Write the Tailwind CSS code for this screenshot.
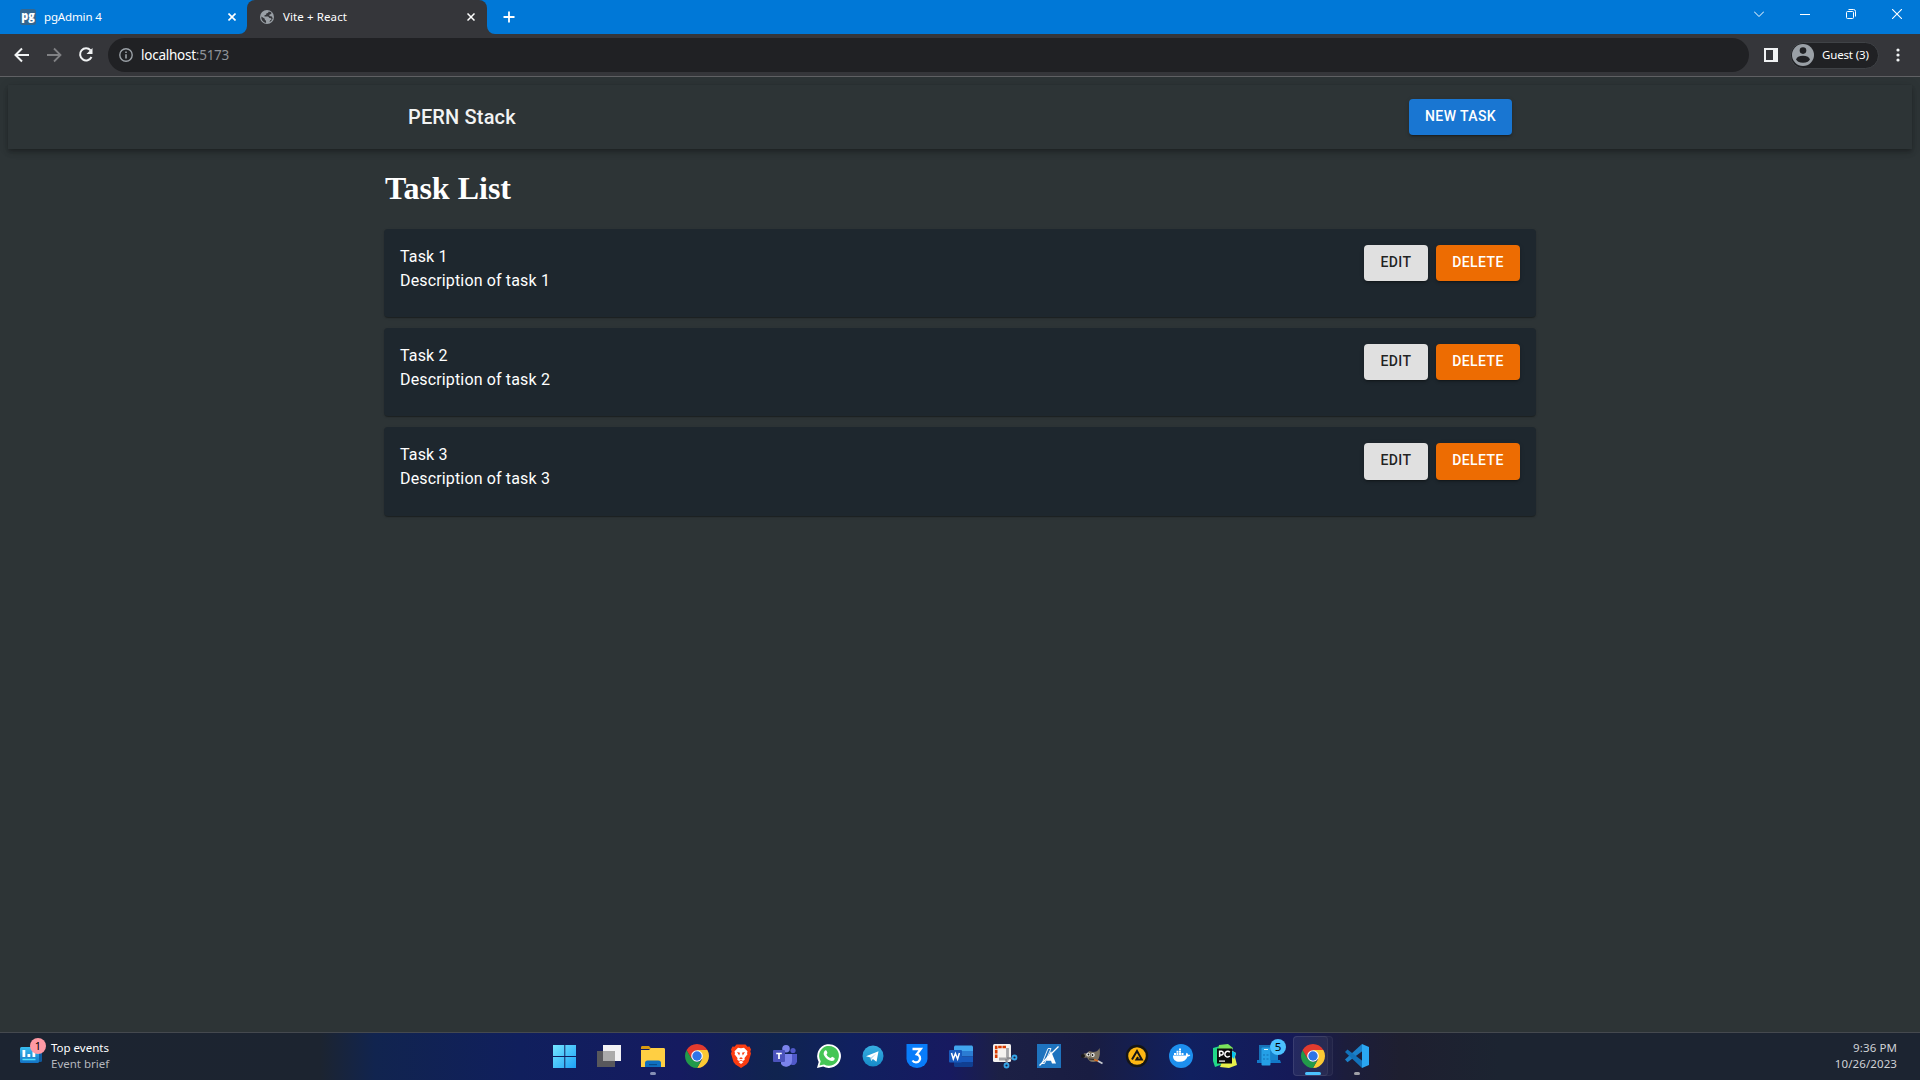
<!DOCTYPE html>
<html lang="en">
<head>
<meta charset="utf-8">
<title>Vite + React</title>
<script src="https://cdn.jsdelivr.net/npm/@tailwindcss/browser@4"></script>
</head>
<body class="h-[1080px] w-[1920px] overflow-hidden bg-[#2d3436] flex flex-col font-['Noto_Sans',sans-serif] text-white">

<!-- Tab strip -->
<div class="h-[34px] shrink-0 bg-[#0078d7] flex items-center">
  <div class="w-[247px] h-full flex items-center pl-5 pr-[11px] relative">
    <svg class="w-4 h-4 shrink-0" viewBox="0 0 16 16"><rect width="16" height="16" rx="2.500" fill="#336791"/><text x="8" y="11" text-anchor="middle" textLength="13.500" lengthAdjust="spacingAndGlyphs" font-family="Open Sans, sans-serif" font-weight="800" font-size="11.500" fill="#fff">pg</text></svg>
    <span class="ml-2 text-[11.5px] tracking-[-0.15px] leading-4 flex-1">pgAdmin 4</span>
    <svg class="w-2 h-2" viewBox="0 0 8 8" stroke="#fff" stroke-width="1.600"><path d="M.5.5l7 7M7.500.5l-7 7"/></svg>
  </div>
  <div class="w-[240px] h-full bg-[#35363a] rounded-t-lg flex items-center pl-3 pr-3 relative">
    <svg class="absolute bottom-0 -left-2 w-2 h-2" viewBox="0 0 8 8"><path d="M8 0v8H0a8 8 0 0 0 8-8z" fill="#35363a"/></svg>
    <svg class="absolute bottom-0 -right-2 w-2 h-2" viewBox="0 0 8 8"><path d="M0 0v8h8a8 8 0 0 1-8-8z" fill="#35363a"/></svg>
    <svg class="w-4 h-4 shrink-0" viewBox="0 0 16 16"><circle cx="8" cy="8" r="7" fill="#9aa0a6"/><path d="M2.300 7.500l3.500 2.200v1.100l1.200 1 .1 2.200A6 6 0 0 1 2.300 7.500zM9.500 2.300l-.3 1.500-1.900.6-.2 1.400-1.600.5v1.200l3.700.1 1.200 1.300 1.700.3.400 1.600-1.400.5-.6 1.700a6 6 0 0 0 3.200-3.500l-.8-2-2.600-.6.300-1.500 1.500-.4.400-1.200a6 6 0 0 0-3-1.500z" fill="#35363a"/></svg>
    <span class="ml-2 text-[11.5px] tracking-[0.1px] leading-4 flex-1">Vite + React</span>
    <svg class="w-2 h-2" viewBox="0 0 8 8" stroke="#fff" stroke-width="1.500"><path d="M.5.5l7 7M7.500.5l-7 7"/></svg>
  </div>
  <svg class="w-3 h-3 ml-4" viewBox="0 0 12 12" stroke="#fff" stroke-width="1.800"><path d="M6 .5v11M.5 6h11"/></svg>
  <div class="ml-auto flex items-center gap-9 pr-[18px] pb-1.5">
    <svg class="w-2.5 h-2.5" viewBox="0 0 10 10" fill="none" stroke="#fff" stroke-width="1"><path d="M0 2.500l5 5 5-5"/></svg>
    <svg class="w-2.5 h-2.5" viewBox="0 0 10 10" stroke="#fff"><path d="M0 5.500h10"/></svg>
    <svg class="w-2.5 h-2.5" viewBox="0 0 10 10" fill="none" stroke="#fff"><rect x=".5" y="2.500" width="7" height="7" rx="1"/><path d="M2.500.5h5a2 2 0 0 1 2 2v5"/></svg>
    <svg class="w-2.5 h-2.5" viewBox="0 0 10 10" stroke="#fff" stroke-width="1.100"><path d="M0 0l10 10M10 0L0 10"/></svg>
  </div>
</div>

<!-- Toolbar -->
<div class="h-[43px] shrink-0 bg-[#35363a] border-b border-[#606164] flex items-center pl-3.5">
  <svg class="w-4 h-4" viewBox="0 0 16 16" fill="none" stroke="#f1f3f4" stroke-width="2"><path d="M15 8H2M8 1.500L1.500 8 8 14.500"/></svg>
  <svg class="w-4 h-4 ml-4" viewBox="0 0 16 16" fill="none" stroke="#808184" stroke-width="1.800"><path d="M1 8H14M8 1.500L14.500 8 8 14.500"/></svg>
  <svg class="w-4 h-4 ml-4" viewBox="0 0 16 16" fill="none" stroke="#f1f3f4" stroke-width="2"><path d="M12.600 3.400A6 6 0 1 0 13.500 10"/><path d="M14.500 1v6h-6z" fill="#f1f3f4" stroke="none"/></svg>
  <div class="ml-3.5 w-[1641px] h-[34px] rounded-full bg-[#202124] flex items-center pl-[11px]">
    <svg class="w-3.5 h-3.5" viewBox="0 0 14 14"><circle cx="7" cy="7" r="6.200" fill="none" stroke="#9aa0a6" stroke-width="1.400"/><path d="M6.200 6.200h1.600v4.300H6.200zM6.200 3.400h1.600v1.600H6.200z" fill="#9aa0a6"/></svg>
    <span class="ml-2 text-[13.5px] tracking-[-0.25px] leading-5">localhost<span class="text-[#8f9398]">:5173</span></span>
  </div>
  <svg class="w-3.5 h-3.5 ml-[15px]" viewBox="0 0 14 14"><path d="M0 0h14v14H0zM2 2v10h7V2z" fill-rule="evenodd" fill="#f1f3f4"/></svg>
  <div class="ml-3 w-[89px] h-[27px] rounded-full bg-[#202124] border border-[#3f4246] flex items-center pl-px">
    <svg class="w-[22px] h-[22px] shrink-0" viewBox="0 0 22 22"><circle cx="11" cy="11" r="11" fill="#9aa0a6"/><circle cx="11" cy="6.600" r="3.300" fill="#202124"/><ellipse cx="11" cy="15.300" rx="6.700" ry="3.500" fill="#202124"/></svg>
    <span class="ml-2 text-[11.5px] tracking-[-0.15px] leading-4 whitespace-nowrap">Guest (3)</span>
  </div>
  <svg class="w-1 h-3.5 ml-[17px]" viewBox="0 0 4 14" fill="#f1f3f4"><circle cx="2" cy="2" r="1.600"/><circle cx="2" cy="7" r="1.600"/><circle cx="2" cy="12" r="1.600"/></svg>
</div>

<!-- Page -->
<main class="flex-1 min-h-0 p-2 font-[Roboto,sans-serif]">
  <header class="h-16 shadow-[0_2px_4px_-1px_rgba(0,0,0,.2),0_4px_5px_0_rgba(0,0,0,.14),0_1px_10px_0_rgba(0,0,0,.12)]">
    <div class="w-[1152px] h-full mx-auto px-6 flex items-center justify-between">
      <span class="text-xl leading-8 font-medium tracking-[0.15px] text-[#f2f3f3]">PERN Stack</span>
      <button class="h-9 w-[103px] pb-0.5 rounded-sm bg-[#1976d2] text-sm font-medium tracking-[0.4px] shadow-[0_3px_1px_-2px_rgba(0,0,0,.2),0_2px_2px_0_rgba(0,0,0,.14),0_1px_5px_0_rgba(0,0,0,.12)]">NEW TASK</button>
    </div>
  </header>
  <section class="w-[1152px] mx-auto flex flex-col">
    <h1 class="mt-[21px] mb-[21.9px] pl-px text-[32px] leading-[37px] font-bold font-['Liberation_Serif',serif]">Task List</h1>
    <div class="flex flex-col gap-[10.6px]">
      <article class="h-[88.5px] rounded-sm bg-[#1e272e] p-4 flex justify-between items-start shadow-[0_2px_1px_-1px_rgba(0,0,0,.2),0_1px_1px_0_rgba(0,0,0,.14),0_1px_3px_0_rgba(0,0,0,.12)]">
        <div class="leading-6 tracking-[0.15px]"><p>Task 1</p><p>Description of task 1</p></div>
        <div class="flex gap-2"><button class="h-[36.5px] pb-0.5 w-16 rounded-sm bg-[#e0e0e0] text-black/87 text-sm font-medium tracking-[0.4px] shadow-[0_3px_1px_-2px_rgba(0,0,0,.2),0_2px_2px_0_rgba(0,0,0,.14),0_1px_5px_0_rgba(0,0,0,.12)]">EDIT</button><button class="h-[36.5px] pb-0.5 w-21 rounded-sm bg-[#ed6c02] text-sm font-medium tracking-[0.4px] shadow-[0_3px_1px_-2px_rgba(0,0,0,.2),0_2px_2px_0_rgba(0,0,0,.14),0_1px_5px_0_rgba(0,0,0,.12)]">DELETE</button></div>
      </article>
      <article class="h-[88.5px] rounded-sm bg-[#1e272e] p-4 flex justify-between items-start shadow-[0_2px_1px_-1px_rgba(0,0,0,.2),0_1px_1px_0_rgba(0,0,0,.14),0_1px_3px_0_rgba(0,0,0,.12)]">
        <div class="leading-6 tracking-[0.15px]"><p>Task 2</p><p>Description of task 2</p></div>
        <div class="flex gap-2"><button class="h-[36.5px] pb-0.5 w-16 rounded-sm bg-[#e0e0e0] text-black/87 text-sm font-medium tracking-[0.4px] shadow-[0_3px_1px_-2px_rgba(0,0,0,.2),0_2px_2px_0_rgba(0,0,0,.14),0_1px_5px_0_rgba(0,0,0,.12)]">EDIT</button><button class="h-[36.5px] pb-0.5 w-21 rounded-sm bg-[#ed6c02] text-sm font-medium tracking-[0.4px] shadow-[0_3px_1px_-2px_rgba(0,0,0,.2),0_2px_2px_0_rgba(0,0,0,.14),0_1px_5px_0_rgba(0,0,0,.12)]">DELETE</button></div>
      </article>
      <article class="h-[88.5px] rounded-sm bg-[#1e272e] p-4 flex justify-between items-start shadow-[0_2px_1px_-1px_rgba(0,0,0,.2),0_1px_1px_0_rgba(0,0,0,.14),0_1px_3px_0_rgba(0,0,0,.12)]">
        <div class="leading-6 tracking-[0.15px]"><p>Task 3</p><p>Description of task 3</p></div>
        <div class="flex gap-2"><button class="h-[36.5px] pb-0.5 w-16 rounded-sm bg-[#e0e0e0] text-black/87 text-sm font-medium tracking-[0.4px] shadow-[0_3px_1px_-2px_rgba(0,0,0,.2),0_2px_2px_0_rgba(0,0,0,.14),0_1px_5px_0_rgba(0,0,0,.12)]">EDIT</button><button class="h-[36.5px] pb-0.5 w-21 rounded-sm bg-[#ed6c02] text-sm font-medium tracking-[0.4px] shadow-[0_3px_1px_-2px_rgba(0,0,0,.2),0_2px_2px_0_rgba(0,0,0,.14),0_1px_5px_0_rgba(0,0,0,.12)]">DELETE</button></div>
      </article>
    </div>
  </section>
</main>

<!-- Taskbar -->
<footer class="h-12 shrink-0 pb-[1px] border-t border-[#45494f] bg-[linear-gradient(90deg,#1c2431_0px,#1c2430_320px,#11244f_375px,#101f5d_520px,#151b60_680px,#10244f_775px,#10205f_850px,#171a60_950px,#1c2045_1000px,#191d42_1090px,#102060_1190px,#151a58_1290px,#1c1d3c_1345px,#1e1f30_1400px,#1c2431_1500px,#1c2431_1920px)] flex items-center text-[11.5px] leading-4">
  <div class="w-[553px] flex items-center pl-5 pb-px">
    <div class="relative w-6 h-6">
      <svg class="w-[22px] h-[22px]" viewBox="0 0 22 22"><defs><linearGradient id="wd" x2="0" y2="1"><stop stop-color="#38bdf0"/><stop offset="1" stop-color="#1473c4"/></linearGradient></defs><rect x="3" y="3" width="19" height="15" rx="1.500" fill="#0f5a9e"/><rect y="3" width="19" height="16" rx="1.500" fill="url(#wd)"/><path d="M2.500 6h2.800v7H2.500zM7.500 10h2.800v3H7.500zM12.500 8h2.800v5h-2.800z" fill="#fff"/><path d="M2.500 15.500h13" stroke="#4fe0ff" stroke-width="1.500"/></svg>
      <span class="absolute -top-[6px] left-[10px] w-4 h-4 rounded-full bg-[#ff99a4] text-black text-[11px] text-center leading-4">1</span>
    </div>
    <div class="ml-[7px]"><p>Top events</p><p class="text-[#b4b7bd]">Event brief</p></div>
  </div>
  <div class="flex gap-5 items-center h-full">
    <svg class="w-6 h-6 overflow-visible" viewBox="0 0 24 24"><defs><linearGradient id="win" x2="1" y2="1"><stop stop-color="#74e5ff"/><stop offset="1" stop-color="#1da2f5"/></linearGradient></defs><path d="M0 1h11.300v11H0zM12.300 1H23v11H12.300zM0 13h11.300v11H0zM12.300 13H23v11H12.300z" fill="url(#win)"/></svg>
    <svg class="w-6 h-6" viewBox="0 0 24 24"><path d="M0 7h18v16H0z" fill="#58585c"/><path d="M6 1h18v16H6z" fill="#f2f2f4"/><path d="M6 7h12v10H6z" fill="#aaa"/></svg>
    <svg class="w-6 h-6 overflow-visible" viewBox="0 0 24 24"><path d="M0 3.500C0 2.500.5 2 1.500 2H8l2.500 3H0z" fill="#d89a10"/><path d="M0 6h8l2-2h12.500c1 0 1.500.5 1.500 1.500V23H0z" fill="#ffcf43"/><path d="M4 23v-4a2.500 2.500 0 0 1 2.500-2.500h11A2.500 2.500 0 0 1 20 19v4z" fill="#0f6fc0"/><path d="M8 20h8v1.200H8z" fill="#094d8a"/><rect x="9" y="28" width="6" height="3" rx="1.500" fill="#8790b5"/></svg>
    <svg class="w-6 h-6" viewBox="0 0 24 24"><path d="M12 6h10.390A12 12 0 0 1 12 24l5.200-9z" fill="#fcc934"/><path d="M1.610 6L6.800 15l5.200 3 4-1L12 24A12 12 0 0 1 1.610 6z" fill="#229a4a"/><path d="M1.610 6A12 12 0 0 1 22.390 6H12l-5 4-.2 5z" fill="#e33b2e"/><circle cx="12" cy="12" r="5.800" fill="#fff"/><circle cx="12" cy="12" r="4.700" fill="#2d74e8"/></svg>
    <svg class="w-6 h-6" viewBox="0 0 24 24"><path d="M7.500.5h9l2 2.200 2-.3 1.500 3-.7 2 .7 2.100-2.500 8.500-2 2.500L12 24l-5.500-3.500-2-2.500L2 9.500l.7-2.100-.7-2 1.500-3 2 .3z" fill="#fb3c10"/><path d="M12 4.200l3-.5 3.500 3.500-.5 2 .5 1-3 3.800.2 1.800-1.700 1.200L12 16l-2 1-1.700-1.200.2-1.800-3-3.800.5-1-.5-2L9 3.700z" fill="#fff"/><path d="M8 8l3 .8-.8 2.700zM16 8l-3 .8.8 2.700zM10 14.200l2-.9 2 .9-2 1z" fill="#fb3c10"/><path d="M9.500 18l2.500-1.200 2.500 1.200L12 20z" fill="#fff"/></svg>
    <svg class="w-6 h-6" viewBox="0 0 24 24"><circle cx="20" cy="6.500" r="2.600" fill="#5059c9"/><path d="M17 10h7v7.500a4 4 0 0 1-6 3z" fill="#5059c9"/><circle cx="13" cy="4.800" r="3.800" fill="#7b83eb"/><path d="M8 10h11v7a6 6 0 0 1-11 3z" fill="#7b83eb"/><rect y="6" width="12" height="12" rx="1" fill="#4b53bc"/><path d="M3.200 9.500h5.600M6 9.500V15" stroke="#fff" stroke-width="1.700"/></svg>
    <svg class="w-6 h-6" viewBox="0 0 24 24"><path d="M0 24l1.700-6.100A11.900 11.900 0 1 1 6.200 22.400z" fill="#fff"/><path d="M2.500 21.500l1.200-4.300a9.900 9.900 0 1 1 3.400 3.200z" fill="#45c655"/><path d="M8.400 6.300c.4-.3 1 .1 1.200.5l.8 2c.1.500-.8 1.300-.9 1.600.7 1.600 2.300 3 4.100 3.700.4 0 1.200-1.400 1.600-1.300l2.300 1.200c.4.300 0 1.700-.4 2.200-1 1-2.800 1-4.300.4-3-1.200-5.200-3.700-6-5.800-.5-1.600.3-3.700 1.600-4.500z" fill="#fff"/></svg>
    <svg class="w-6 h-6" viewBox="0 0 24 24"><defs><linearGradient id="tg" x2="0" y2="1"><stop stop-color="#37aee2"/><stop offset="1" stop-color="#168bc8"/></linearGradient></defs><circle cx="12" cy="12" r="10.500" fill="url(#tg)"/><path d="M5 12.200L17.500 7.200l-2 10.500-3.600-2.600-1.800 1.800-.5-3.500z" fill="#fff"/><path d="M9.600 13.400l5.700-4-4.300 4.900-.9 2.600z" fill="#b8d9ee"/></svg>
    <svg class="w-6 h-6" viewBox="0 0 24 24"><path d="M1.500 0h21v15a10.500 9 0 0 1-21 0z" fill="#087cfa"/><path d="M7.500 5h8.300l-4 5.300a4.100 4.100 0 1 1-4.300 6.200" fill="none" stroke="#fff" stroke-width="2.300"/></svg>
    <svg class="w-6 h-6" viewBox="0 0 24 24"><path d="M6 1.500h17l1 1V7H5V2.500z" fill="#41a5ee"/><path d="M5 7h19v5.500H5z" fill="#2b7cd3"/><path d="M5 12.500h19V18H5z" fill="#185abd"/><path d="M5 18h19v4l-1 1H6l-1-1z" fill="#103f91"/><rect y="6" width="13" height="12.500" rx="1" fill="#185abd"/><path d="M2.500 9l1.800 6 2.100-5.500L8.600 15l1.800-6" fill="none" stroke="#fff" stroke-width="1.500"/></svg>
    <svg class="w-6 h-6 overflow-visible" viewBox="0 0 24 24"><rect width="18" height="18" rx="1.500" fill="#f4f2f0"/><path d="M13 3H3.200v11" fill="none" stroke="#d83b01" stroke-width="2.600" stroke-dasharray="3.500 .8"/><path d="M14.500 4v11H6" fill="none" stroke="#a5a5a8" stroke-width="2.800"/><path d="M14 14l5 .5M13 15l1 4" stroke="#8c8c90" stroke-width="2.200"/><circle cx="21.500" cy="13.500" r="2" fill="none" stroke="#35a5e8" stroke-width="1.800"/><circle cx="13.500" cy="21.500" r="2" fill="none" stroke="#35a5e8" stroke-width="1.800"/></svg>
    <svg class="w-6 h-6" viewBox="0 0 24 24"><path d="M0 0h24v24H0z" fill="#1e73be"/><path d="M5 19.500L11 4.500h3L7.500 19.500z" fill="none" stroke="#fff" stroke-width=".9"/><path d="M14 7l5 12.500h-4l-1-2.800H9z" fill="#fff"/><path d="M2.500 21.500L21.500 2.500" stroke="#fff" stroke-width="1.300"/></svg>
    <svg class="w-6 h-6" viewBox="0 0 24 24"><path d="M1 11l3-2 2 1 2-3 4 1c3 0 5-1 6.500-4 .8 4 .5 8-1 11-1 2-3 3.200-5.500 3-3 0-4.500-2-6-4.500l-4 .5z" fill="#7b7262"/><circle cx="7.200" cy="10.500" r="2" fill="#eee"/><circle cx="11.800" cy="11" r="1.900" fill="#eee"/><circle cx="7.500" cy="10.500" r=".9" fill="#111"/><circle cx="11.500" cy="11" r=".9" fill="#111"/><circle cx="2" cy="12" r="2" fill="#17171b"/><path d="M8 15l6 .5" stroke="#222" stroke-width="1"/><path d="M13 15.500l4.500 1.800" stroke="#d96d20" stroke-width="1.500"/><path d="M17 17l4.500 2.500" stroke="#c8cbd0" stroke-width="1.800"/></svg>
    <svg class="w-6 h-6" viewBox="0 0 24 24"><circle cx="12" cy="12" r="11.200" fill="#151515"/><circle cx="12" cy="12" r="8.800" fill="#fdb713"/><path d="M7 15.500L12 7l4.800 8.500h-5.300l1.500-2.500" fill="none" stroke="#151515" stroke-width="2"/></svg>
    <svg class="w-6 h-6" viewBox="0 0 24 24"><circle cx="12" cy="12" r="12" fill="#1d8fee"/><path d="M4 11.500h13c-.2-1.300 0-2 .8-2.800.9.600 1.200 1.200 1.300 2 .9-.1 1.600 0 2.200.4-.5 1.200-1.600 1.500-2.700 1.500-1.200 3.600-4 5.200-8 5.200-4.300 0-6.700-2.300-6.600-6.300z" fill="#fff"/><path d="M5 9h2v2H5zM7.500 9h2v2h-2zM10 9h2v2h-2zM12.500 9h2v2h-2zM7.500 6.700h2v2h-2zM10 6.700h2v2h-2zM10 4.600h2v1.700h-2z" fill="#fff"/></svg>
    <svg class="w-6 h-6" viewBox="0 0 24 24"><path d="M0 4l7-2 7 3-4 15-8 3-2-6z" fill="#21d789"/><path d="M6 1l9-1 5 4-3 6-12-2z" fill="#7be35c"/><path d="M18 6l5 3-1 4 2 8-8 3-9-1 2-5z" fill="#e8f04b"/><path d="M19 7l4 2-2 6-3-3z" fill="#07c3f2"/><path d="M4 4.500h15v15H4z" fill="#0b0b0b"/><path d="M6 16.500h6v1.200H6z" fill="#fff"/><path d="M6.600 13V7.200h2.200a1.900 1.900 0 0 1 0 3.700H6.600M16.800 8.300a2.800 2.800 0 1 0 0 3.700" fill="none" stroke="#fff" stroke-width="1.500"/></svg>
    <div class="relative w-6 h-6"><svg class="w-6 h-6" viewBox="0 0 24 24"><path d="M2 1h16v15H2z" fill="#1672b8"/><path d="M0 16h23l1 3H0z" fill="#1278c8"/><rect x="4.500" y="3.500" width="9" height="18" rx="1" fill="#25a0e6"/><path d="M13.500 6H21v10h-7.500z" fill="#1682cc"/><path d="M6 11h2M9.500 11h2M6 15h2M9.500 15h2" stroke="#1270b5" stroke-width="1"/><path d="M7 5.500h4" stroke="#d9f3ff"/></svg><span class="absolute -top-[5px] left-[13px] w-4 h-4 rounded-full bg-[#4cc2ff] text-black text-[11.5px] leading-4 text-center">5</span></div>
    <div class="relative w-6 h-6">
      <div class="absolute -top-2 -left-2 w-10 h-10 rounded-sm border border-white/5 bg-white/3"></div>
      <div class="absolute -top-2 -left-2 w-[35px] h-10 rounded-sm border border-white/5 bg-white/4"></div>
      <svg class="relative w-6 h-6 overflow-visible" viewBox="0 0 24 24"><path d="M12 6h10.390A12 12 0 0 1 12 24l5.200-9z" fill="#fcc934"/><path d="M1.610 6L6.800 15l5.200 3 4-1L12 24A12 12 0 0 1 1.610 6z" fill="#229a4a"/><path d="M1.610 6A12 12 0 0 1 22.390 6H12l-5 4-.2 5z" fill="#e33b2e"/><circle cx="12" cy="12" r="5.800" fill="#fff"/><circle cx="12" cy="12" r="4.700" fill="#2d74e8"/><rect x="4" y="28" width="16" height="3" rx="1.500" fill="#4cc2ff"/></svg>
    </div>
    <svg class="w-6 h-6 overflow-visible" viewBox="0 0 24 24"><path d="M17 0L0 15.500l2.500 2.800L17.500 7z" fill="#1b80c9"/><path d="M17 24L0 8l2.500-2.500L17.500 17z" fill="#1272ba"/><path d="M17 0l7 3v18l-7 3z" fill="#2aa7f2"/><rect x="9" y="28" width="6" height="3" rx="1.500" fill="#a0a0a6"/></svg>
  </div>
  <div class="ml-auto pr-[23px] pb-px text-right tracking-[0.1px] text-[#d0d2d6]"><p>9:36 PM</p><p>10/26/2023</p></div>
</footer>
</body>
</html>
